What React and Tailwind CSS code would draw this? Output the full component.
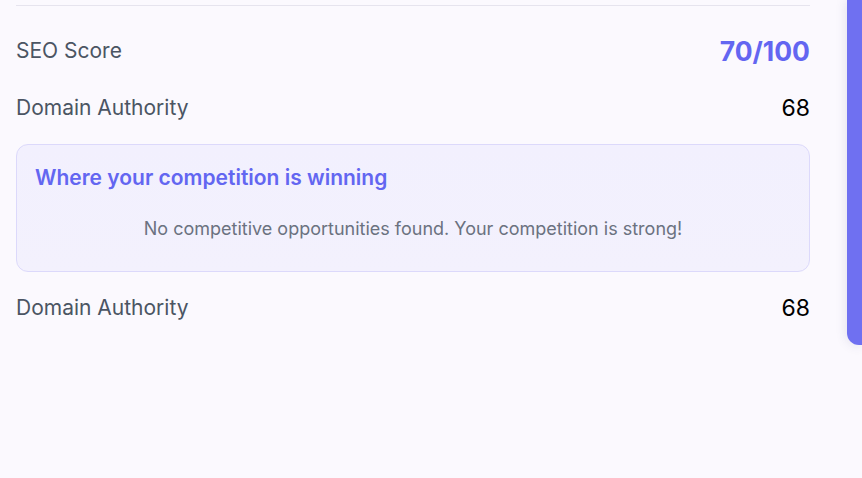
import React from "react";

function Row({ label, children, className = "" }) {
  return (
    <div className={`flex items-center justify-between ${className}`}>
      <span className="text-[21px] leading-[28px] text-[#4b5563]">{label}</span>
      {children}
    </div>
  );
}

export default function App() {
  return (
    <div
      className="flex w-[862px] h-[478px] bg-[#fbf9fe] overflow-hidden"
      style={{ fontFamily: "Inter, 'Noto Sans', sans-serif" }}
    >
      <div className="ml-4 w-[794px] flex flex-col">
        <div className="mt-[5px] border-t border-[#e6e4ee]" />

        <Row label="SEO Score" className="mt-[29px] h-[32px]">
          <span className="text-[26.5px] leading-[32px] font-bold text-[#6366f1]">
            70/100
          </span>
        </Row>

        <Row label="Domain Authority" className="mt-[27px] h-[28px]">
          <span className="text-[23px] leading-[28px] text-black">68</span>
        </Row>

        <div className="mt-[22px] h-[128px] rounded-xl border border-[#dcd9fb] bg-gradient-to-b from-[#f2f0fe] to-[#f3f1fd] px-[18px] pt-[19px]">
          <h3 className="text-[21px] leading-[28px] font-semibold text-[#6366f1]">
            Where your competition is winning
          </h3>
          <p className="mt-[23px] text-center text-[18px] leading-[28px] text-[#6b7280]">
            No competitive opportunities found. Your competition is strong!
          </p>
        </div>

        <Row label="Domain Authority" className="mt-[22px] h-[28px]">
          <span className="text-[23px] leading-[28px] text-black">68</span>
        </Row>
      </div>

      <div className="ml-[37px] w-[15px] h-[345px] rounded-bl-xl bg-[#6f70f1] shadow-[0_0_12px_rgba(60,60,120,0.15)]" />
    </div>
  );
}
